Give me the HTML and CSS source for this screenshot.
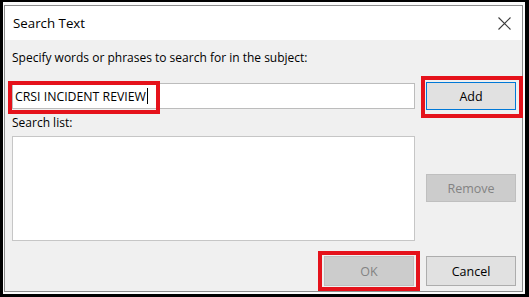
FILE: index.html
```html
<!DOCTYPE html>
<html lang="en">
  <head>
    <meta charset="UTF-8" />
    <meta name="viewport" content="width=device-width, initial-scale=1.0" />
    <title>Search Text</title>
    <link rel="stylesheet" href="styles.css">
  </head>
  <body>
    <div class="screen">
      <div class="dialog">
        <!-- title bar -->
        <div class="titlebar">
          <span class="title">Search Text</span>
          <svg class="close" width="13" height="13" viewBox="0 0 13 13">
            <path d="M0.5 0.5 L12.5 12.5 M12.5 0.5 L0.5 12.5" stroke="#3c3c3c" stroke-width="1.1" fill="none" />
          </svg>
        </div>

        <!-- body -->
        <div class="content">
          <div class="label">Specify words or phrases to search for in the subject:</div>

          <!-- input + add -->
          <div class="row">
            <div class="input">
              <span class="value">CRSI INCIDENT REVIEW</span><span class="caret"></span>
              <div class="mark mark_input"></div>
            </div>
            <div class="btn_box">
              <div class="btn default">Add</div>
              <div class="mark mark_add"></div>
            </div>
          </div>

          <!-- list + remove -->
          <div class="row list_row">
            <div class="list_col">
              <div class="label">Search list:</div>
              <div class="list"></div>
            </div>
            <div class="side_col">
              <div class="btn disabled">Remove</div>
            </div>
          </div>

          <!-- ok / cancel -->
          <div class="footer">
            <div class="btn_box">
              <div class="btn disabled tall">OK</div>
              <div class="mark mark_ok"></div>
            </div>
            <div class="btn tall">Cancel</div>
          </div>
        </div>
      </div>
    </div>
  </body>
</html>
```

FILE: styles.css
```css
*,
*::before,
*::after {
  margin: 0;
  padding: 0;
  box-sizing: border-box;
}

body {
  font-family: "Open Sans", "Noto Sans", sans-serif;
  color: #000;
  background: #000;
}

/* ------------------------------ outer frame ------------------------------ */
.screen {
  width: 529px;
  height: 297px;

  border-style: solid;
  border-color: #000;
  border-width: 2px 4px 3px 3px;

  background: #fbfbfb;

  display: flex;
}

/* ------------------------------ dialog ------------------------------ */
.dialog {
  flex: 1;
  margin: 3px 2px 2px 1px;

  border: 1px solid #8c8c8c;
  background: #f0f0f0;

  display: flex;
  flex-direction: column;
}

.titlebar {
  height: 34px;
  background: #fff;

  display: flex;
  align-items: center;
  justify-content: space-between;

  padding: 0 11px 0 8px;
}

.title {
  font-size: 13.3px;
}

/* ------------------------------ content ------------------------------ */
.content {
  flex: 1;
  padding: 9px 6px 0 7px;

  display: flex;
  flex-direction: column;
}

.label {
  font-size: 12px;
  line-height: 18px;
}

.row {
  display: flex;
  align-items: center;
  gap: 11px;

  margin-top: 15px;
}

.input {
  position: relative;

  width: 403px;
  height: 26px;

  background: #fff;
  border: 1px solid #bcbcbc;

  display: flex;
  align-items: center;
  padding-left: 2px;

  font-size: 12.3px;
}

.caret {
  width: 1px;
  height: 16px;
  background: #000;
  margin-left: 1px;
}

/* list */
.list_row {
  align-items: flex-start;
  margin-top: 4px;
}

.list_col {
  display: flex;
  flex-direction: column;
  gap: 4px;
}

.list {
  width: 403px;
  height: 105px;

  background: #fff;
  border: 1px solid #c6c6c6;
}

.side_col {
  padding-top: 60px;
}

/* ------------------------------ buttons ------------------------------ */
.btn_box {
  position: relative;
}

.btn {
  width: 90px;
  height: 28px;

  background: #e1e1e1;
  border: 1px solid #adadad;

  display: flex;
  align-items: center;
  justify-content: center;

  font-size: 12.5px;
}

.btn.default {
  border-color: #0078d7;
}

.btn.disabled {
  background: #cccccc;
  border-color: #bfbfbf;
  color: #838383;
}

.btn.tall {
  height: 30px;
}

.footer {
  display: flex;
  justify-content: flex-end;
  gap: 12px;

  margin-top: 15px;
}

/* ------------------------------ red marks ------------------------------ */
.mark {
  position: absolute;
  border: 4px solid #e5121b;
}

.mark_input {
  left: -5px;
  top: -3px;
  width: 152px;
  height: 33px;
}

.mark_add {
  left: -5px;
  top: -6px;
  right: -7px;
  bottom: -8px;
}

.mark_ok {
  left: -6px;
  top: -5px;
  right: -6px;
  bottom: -5px;
}
```
